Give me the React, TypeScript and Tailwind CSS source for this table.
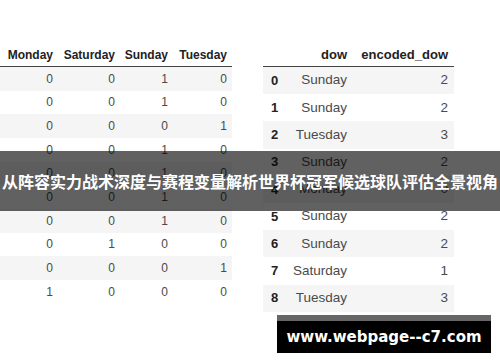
import React from 'react';

const dummies = [
  [0, 0, 1, 0],
  [0, 0, 1, 0],
  [0, 0, 0, 1],
  [0, 0, 1, 0],
  [0, 0, 1, 0],
  [0, 0, 1, 0],
  [0, 0, 1, 0],
  [0, 1, 0, 0],
  [0, 0, 0, 1],
  [1, 0, 0, 0],
];

const days: [string, number][] = [
  ['Sunday', 2],
  ['Sunday', 2],
  ['Tuesday', 3],
  ['Sunday', 2],
  ['Monday', 0],
  ['Sunday', 2],
  ['Sunday', 2],
  ['Saturday', 1],
  ['Tuesday', 3],
];

const font = { fontFamily: '"Liberation Sans", Arial, sans-serif' };

export default function App() {
  return (
    <div className="relative w-[500px] h-[362px] bg-white overflow-hidden" style={font}>
      <div className="flex pt-[44px]">
        {/* One-hot table */}
        <div className="w-[232px] text-[12px]">
          <div className="grid grid-cols-[58px_62px_53px_59px] h-[23px] items-center border-b border-[#444] font-bold text-[#222] text-right">
            <div className="pr-[5px]">Monday</div>
            <div className="pr-[5px]">Saturday</div>
            <div className="pr-[5px]">Sunday</div>
            <div className="pr-[5px]">Tuesday</div>
          </div>
          {dummies.map((row, i) => (
            <div
              key={i}
              className={`grid grid-cols-[58px_62px_53px_59px] h-[23.67px] items-center text-right text-[#4a4a4a] ${
                i % 2 === 0 ? 'bg-[#f5f5f5]' : 'bg-white'
              }`}
            >
              {row.map((v, j) => (
                <div key={j} className="pr-[5px]">
                  {v}
                </div>
              ))}
            </div>
          ))}
        </div>

        {/* Encoded table */}
        <div className="ml-[31px] w-[191px]">
          <div className="grid grid-cols-[23px_61px_101px] pr-[6px] h-[23px] items-center border-b border-[#444] font-bold text-[#222] text-[13px] text-right">
            <div />
            <div>dow</div>
            <div>encoded_dow</div>
          </div>
          {days.map(([d, n], i) => (
            <div
              key={i}
              className={`grid grid-cols-[23px_61px_101px] pr-[6px] h-[27.2px] items-center text-[13.5px] text-[#4a4a4a] ${
                i % 2 === 0 ? 'bg-[#f5f5f5]' : 'bg-white'
              }`}
            >
              <div className="pl-[8px] font-bold text-[#222] text-[13px]">{i}</div>
              <div className="text-right">{d}</div>
              <div className="text-right">{n}</div>
            </div>
          ))}
        </div>
      </div>

      {/* title banner */}
      <div className="absolute left-0 right-0 top-[151px] h-[60px] bg-black/[0.62] flex items-center justify-center">
        <span
          className="text-white font-bold text-[16px] whitespace-nowrap"
          style={{ fontFamily: '"Noto Sans CJK SC", "Noto Sans", sans-serif' }}
        >
          从阵容实力战术深度与赛程变量解析世界杯冠军候选球队评估全景视角
        </span>
      </div>

      {/* watermark */}
      <div className="absolute left-[277px] top-[315px] w-[214px] h-[38px] bg-black border-t-[6px] border-[#666] flex items-center justify-center">
        <span
          className="text-white font-bold text-[15px]"
          style={{ fontFamily: '"DejaVu Sans", Verdana, sans-serif' }}
        >
          www.webpage--c7.com
        </span>
      </div>
    </div>
  );
}
